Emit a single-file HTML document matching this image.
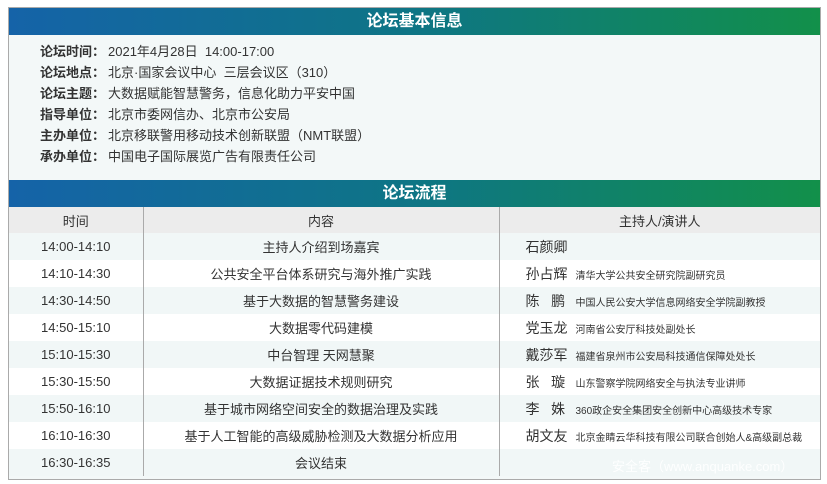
<!DOCTYPE html>
<html><head><meta charset="utf-8"><style>
*{margin:0;padding:0;box-sizing:border-box}
body{width:827px;height:484px;background:#fff;font-family:"Liberation Sans","Noto Sans CJK SC",sans-serif;color:#333;position:relative;overflow:hidden}
.box{position:absolute;left:8px;top:7px;width:813px;height:473px;border:1px solid #aaa;background:#f3f8f8}
.hd{height:27px;background:linear-gradient(90deg,#1563a8 0%,#0e7585 50%,#12904a 100%);color:#fff;font-weight:bold;font-size:16px;text-align:center;line-height:27px}
.info{height:145px;padding:6px 0 0 31px;font-size:13px;line-height:21px}
.info b{font-weight:bold;color:#333;margin-right:3px}
table{border-collapse:collapse;width:100%;font-size:13px}
td,th{height:27px;padding:0}
th{background:#ececec;font-weight:normal;height:26px}
.c1{width:134px;text-align:center}
.c2{width:356px;text-align:center;border-left:1px solid #aaa}
.c3{border-left:1px solid #aaa;padding-left:26px;white-space:nowrap}
th.c3{padding-left:0;text-align:center}
tr.w td{background:#fff}
tr.l td{background:#f1f7f7}
.n{display:inline-block;width:50px;font-size:14px}
.s{font-size:10px}
.wm{position:absolute;left:612px;top:456px;color:rgba(255,255,255,.9);font-size:13px}
</style></head><body>
<div class="box">
<div class="hd">论坛基本信息</div>
<div class="info">
<div><b>论坛时间：</b>2021年4月28日&nbsp; 14:00-17:00</div>
<div><b>论坛地点：</b>北京·国家会议中心&nbsp; 三层会议区（310）</div>
<div><b>论坛主题：</b>大数据赋能智慧警务，信息化助力平安中国</div>
<div><b>指导单位：</b>北京市委网信办、北京市公安局</div>
<div><b>主办单位：</b>北京移联警用移动技术创新联盟（NMT联盟）</div>
<div><b>承办单位：</b>中国电子国际展览广告有限责任公司</div>
</div>
<div class="hd">论坛流程</div>
<table>
<tr><th class="c1">时间</th><th class="c2">内容</th><th class="c3">主持人/演讲人</th></tr>
<tr class="l"><td class="c1">14:00-14:10</td><td class="c2">主持人介绍到场嘉宾</td><td class="c3"><span class="n">石颜卿</span></td></tr>
<tr class="w"><td class="c1">14:10-14:30</td><td class="c2">公共安全平台体系研究与海外推广实践</td><td class="c3"><span class="n">孙占辉</span><span class="s">清华大学公共安全研究院副研究员</span></td></tr>
<tr class="l"><td class="c1">14:30-14:50</td><td class="c2">基于大数据的智慧警务建设</td><td class="c3"><span class="n">陈&nbsp;&nbsp;&nbsp;鹏</span><span class="s">中国人民公安大学信息网络安全学院副教授</span></td></tr>
<tr class="w"><td class="c1">14:50-15:10</td><td class="c2">大数据零代码建模</td><td class="c3"><span class="n">党玉龙</span><span class="s">河南省公安厅科技处副处长</span></td></tr>
<tr class="l"><td class="c1">15:10-15:30</td><td class="c2">中台智理 天网慧聚</td><td class="c3"><span class="n">戴莎军</span><span class="s">福建省泉州市公安局科技通信保障处处长</span></td></tr>
<tr class="w"><td class="c1">15:30-15:50</td><td class="c2">大数据证据技术规则研究</td><td class="c3"><span class="n">张&nbsp;&nbsp;&nbsp;璇</span><span class="s">山东警察学院网络安全与执法专业讲师</span></td></tr>
<tr class="l"><td class="c1">15:50-16:10</td><td class="c2">基于城市网络空间安全的数据治理及实践</td><td class="c3"><span class="n">李&nbsp;&nbsp;&nbsp;姝</span><span class="s">360政企安全集团安全创新中心高级技术专家</span></td></tr>
<tr class="w"><td class="c1">16:10-16:30</td><td class="c2">基于人工智能的高级威胁检测及大数据分析应用</td><td class="c3"><span class="n">胡文友</span><span class="s">北京金睛云华科技有限公司联合创始人&amp;高级副总裁</span></td></tr>
<tr class="l"><td class="c1">16:30-16:35</td><td class="c2">会议结束</td><td class="c3"></td></tr>
</table>
</div>
<div class="wm">安全客（www.anquanke.com）</div>
</body></html>
